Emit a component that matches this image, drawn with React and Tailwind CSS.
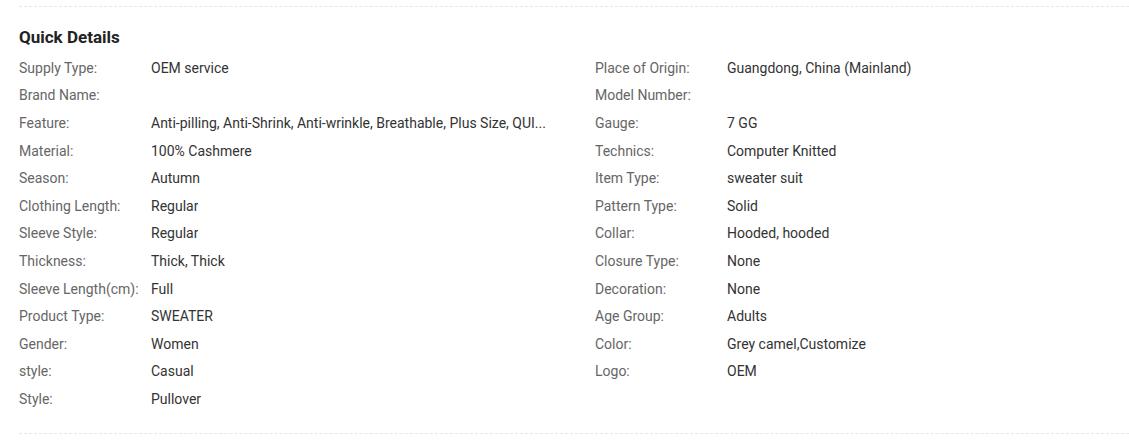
import React from 'react';

const left = [
  ['Supply Type:', 'OEM service'],
  ['Brand Name:', ''],
  ['Feature:', 'Anti-pilling, Anti-Shrink, Anti-wrinkle, Breathable, Plus Size, QUI...'],
  ['Material:', '100% Cashmere'],
  ['Season:', 'Autumn'],
  ['Clothing Length:', 'Regular'],
  ['Sleeve Style:', 'Regular'],
  ['Thickness:', 'Thick, Thick'],
  ['Sleeve Length(cm):', 'Full'],
  ['Product Type:', 'SWEATER'],
  ['Gender:', 'Women'],
  ['style:', 'Casual'],
  ['Style:', 'Pullover'],
];

const right = [
  ['Place of Origin:', 'Guangdong, China (Mainland)'],
  ['Model Number:', ''],
  ['Gauge:', '7 GG'],
  ['Technics:', 'Computer Knitted'],
  ['Item Type:', 'sweater suit'],
  ['Pattern Type:', 'Solid'],
  ['Collar:', 'Hooded, hooded'],
  ['Closure Type:', 'None'],
  ['Decoration:', 'None'],
  ['Age Group:', 'Adults'],
  ['Color:', 'Grey camel,Customize'],
  ['Logo:', 'OEM'],
];

const Row = ({ item }) => {
  if (!item) return <div className="h-[27.6px]"></div>;
  return (
    <div className="flex items-center h-[27.6px] text-[14px] leading-[18px]">
      <span className="w-[132px] shrink-0 whitespace-nowrap text-[#666]">{item[0]}</span>
      <span className="max-w-[430px] whitespace-nowrap overflow-hidden text-[#333]">{item[1]}</span>
    </div>
  );
};

const App = () => {
  const rows = left.map((l, i) => [l, right[i]]);
  return (
    <div className="bg-white pl-[19px] pt-[6px] min-h-[441px]" style={{ fontFamily: 'Roboto, "Liberation Sans", sans-serif' }}>
      <div className="border-t border-dashed border-[#e6e6e6]">
        <h2 className="pt-[20px] text-[17px] leading-[20px] font-bold text-[#222]">Quick Details</h2>
        <div className="mt-[7px] grid grid-cols-[576px_1fr]">
          {rows.map((r, i) => (
            <React.Fragment key={i}>
              <Row item={r[0]} />
              <Row item={r[1]} />
            </React.Fragment>
          ))}
        </div>
        <div className="mt-[20px] border-t border-dashed border-[#e6e6e6]"></div>
      </div>
    </div>
  );
};

export default App;
